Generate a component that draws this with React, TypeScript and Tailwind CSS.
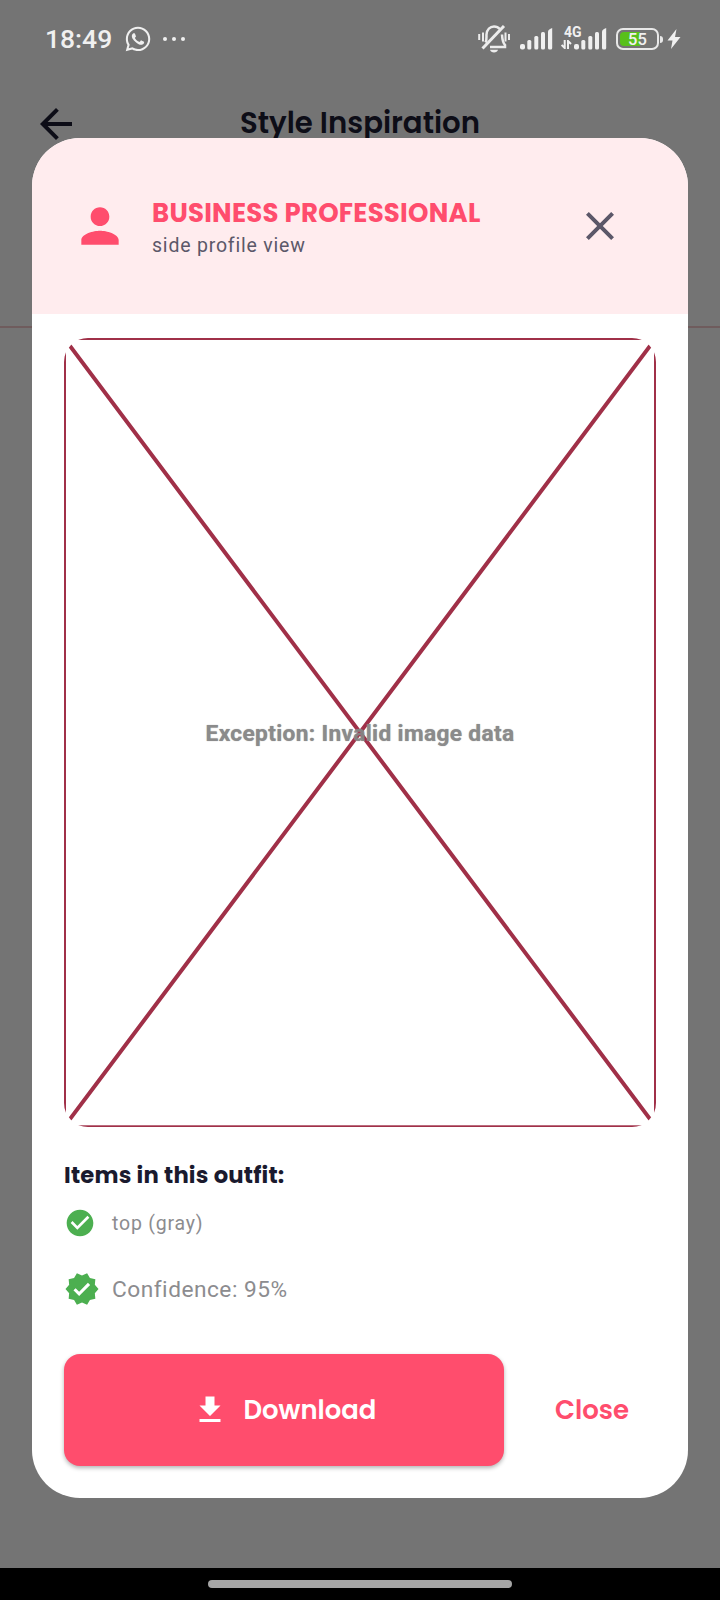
import { MdArrowBack, MdCheckCircle, MdClose, MdDownload, MdPerson, MdVerified } from "react-icons/md";
import { FaWhatsapp } from "react-icons/fa";

const heading = "font-['Poppins','Inter',sans-serif] whitespace-nowrap";
const body = "font-['Roboto',sans-serif] whitespace-nowrap";

function SilentIcon() {
  return (
    <svg width="32" height="28" viewBox="0 0 32 28" fill="none" stroke="#ececec" strokeWidth="2.5">
      <path d="M7.5 17.5C9 15 8.300 12 8.500 9.500 C9 4.500 12 1.500 16 1.500 C18.500 1.500 20.500 2.500 21.800 4" />
      <path d="M24 9.500C24.300 14.500 24.300 17 27 20V22H12" />
      <path d="M4.500 23.500L26 1" strokeWidth="3" />
      <path d="M12 24.700H20C19.500 26.500 18 27.500 16 27.500S12.500 26.500 12 24.700Z" fill="#ececec" stroke="none" />
      <path d="M1.200 9v6M5 7.500v9M27.500 7.500v9M31 9v6" strokeWidth="2" />
    </svg>
  );
}

function Signal() {
  return (
    <svg width="33" height="22" viewBox="0 0 33 22" fill="#f0f0f0">
      <rect x="0" y="16" width="5" height="5.500" rx="2" />
      <rect x="7.300" y="12" width="4" height="9.500" rx="1.500" />
      <rect x="14.300" y="8" width="4" height="13.500" rx="1.500" />
      <rect x="21" y="4" width="4" height="17.500" rx="1.500" />
      <path d="M28 3.500Q28 2 30 1L32.200 0V20Q32.200 21.500 30.700 21.500H29.500Q28 21.500 28 20Z" />
    </svg>
  );
}

function StatusBar() {
  return (
    <div className="flex h-[78px] items-center pl-[45px] pr-[39px] text-[#f0f0f0]">
      <span className={`${body} w-[80px] text-[26.500px] font-medium leading-8`}>18:49</span>
      <FaWhatsapp className="-ml-px h-[28px] w-[28px]" />
      <div className="ml-[11px] flex gap-[5px]">
        <i className="h-1 w-1 rounded-full bg-[#f0f0f0]" />
        <i className="h-1 w-1 rounded-full bg-[#f0f0f0]" />
        <i className="h-1 w-1 rounded-full bg-[#f0f0f0]" />
      </div>
      <div className="ml-auto flex items-center">
        <SilentIcon />
        <div className="ml-[10px]"><Signal /></div>
        <div className="relative ml-[21px]">
          <Signal />
          <span className={`${body} absolute -left-[10px] -top-[3px] text-[14px] font-bold leading-[14px]`}>4G</span>
          <svg className="absolute -left-[13px] top-[12px]" width="11" height="9" viewBox="0 0 11 9" fill="none" stroke="#f0f0f0" strokeWidth="2">
            <path d="M3.700 0V8L.6 5M7 9V1L10 4" />
          </svg>
        </div>
        <div className="relative ml-[9px] flex h-[22px] w-[43px] items-center justify-center overflow-hidden rounded-[7px] border-[2px] border-[#e8e8e8]">
          <div className="absolute left-[2px] top-[2px] h-[14px] w-[20px] rounded-l-[4px] bg-[#58c01b]" />
          <span className={`${body} relative top-[0.500px] text-[16.500px] font-medium leading-5`}>55</span>
        </div>
        <div className="ml-[1px] h-[7px] w-[3px] rounded-r-full bg-[#e8e8e8]" />
        <svg className="ml-[4px]" width="14" height="22" viewBox="0 0 14 22" fill="#f0f0f0">
          <path d="M9.500 1L.5 12.500H5.500L4 21L13.500 9H8Z" />
        </svg>
      </div>
    </div>
  );
}

function BrokenImage() {
  return (
    <div className="relative flex h-[789px] w-[592px] items-center justify-center overflow-hidden rounded-[24px]">
      <svg className="absolute inset-0" width="592" height="789" viewBox="0 0 592 789" fill="none" stroke="#a03048">
        <rect x="1" y="1" width="590" height="787.300" strokeWidth="2" />
        <path d="M0 0L592 789M592 0L0 789" strokeWidth="4" />
      </svg>
      <span className={`${body} relative top-[1px] text-[22.700px] font-bold leading-7 tracking-[0.350px] text-[#858585] opacity-95 [text-shadow:0_0_1px_#999]`}>
        Exception: Invalid image data
      </span>
    </div>
  );
}

function OutfitDialog() {
  return (
    <section className="absolute left-8 top-[138px] flex h-[1360px] w-[656px] flex-col overflow-hidden rounded-[48px] bg-white">
      <header className="flex h-[176px] shrink-0 items-center bg-[#ffecee] pl-10 pr-16">
        <MdPerson className="h-14 w-14 text-[#ff4d6d]" />
        <div className="ml-6 flex-1 pt-[7px]">
          <h2 className={`${heading} text-[26px] font-bold leading-8 tracking-[0.250px] text-[#ff4d6d]`}>BUSINESS PROFESSIONAL</h2>
          <p className={`${body} mt-px text-[19.500px] leading-8 tracking-[0.800px] text-[#5c5869]`}>side profile view</p>
        </div>
        <MdClose className="h-12 w-12 text-[#5c5869]" />
      </header>
      <div className="flex flex-1 flex-col px-8 pt-6">
        <BrokenImage />
        <h3 className={`${heading} mt-[32px] text-[22.700px] font-bold leading-8 tracking-[0.200px] text-[#1a1a2e]`}>Items in this outfit:</h3>
        <div className="mt-4 flex h-8 items-center gap-4">
          <MdCheckCircle className="h-8 w-8 text-[#4caf50]" />
          <span className={`${body} pt-[2px] text-[19.500px] leading-8 tracking-[0.800px] text-[#8c8c8f]`}>top (gray)</span>
        </div>
        <div className="mt-8 flex items-center gap-3">
          <MdVerified className="h-9 w-9 text-[#4caf50]" />
          <span className={`${body} mt-[1px] text-[22.700px] leading-8 tracking-[0.500px] text-[#8c8c8f]`}>Confidence: 95%</span>
        </div>
        <div className="mt-[47px] flex items-center">
          <button className="flex h-[112px] w-[440px] items-center rounded-2xl bg-[#ff4d6d] pl-[127.500px] text-white shadow-[0_2px_4px_rgba(0,0,0,0.3)]">
            <MdDownload className="h-9 w-9" />
            <span className={`${heading} ml-4 text-[25.900px] font-semibold leading-8`}>Download</span>
          </button>
          <button className={`${heading} ml-[51px] text-[26px] font-semibold leading-8 text-[#ff4d6d]`}>Close</button>
        </div>
      </div>
    </section>
  );
}

export default function App() {
  return (
    <main className="relative flex h-[1600px] w-[720px] flex-col overflow-hidden bg-[#747474]">
      <StatusBar />
      <div className="flex h-[250px] items-start border-b-2 border-[#6f5c5d] pl-8 pt-[22px]">
        <MdArrowBack className="h-12 w-12 text-[#0d0d17]" />
        <h1 className={`${heading} ml-[160px] mt-[3px] text-[29.200px] font-semibold leading-10 text-[#0d0d17]`}>Style Inspiration</h1>
      </div>
      <div className="mt-auto flex h-8 shrink-0 items-center justify-center bg-black">
        <div className="h-2 w-[304px] rounded-full bg-[#a5a5a5]" />
      </div>
      <OutfitDialog />
    </main>
  );
}
